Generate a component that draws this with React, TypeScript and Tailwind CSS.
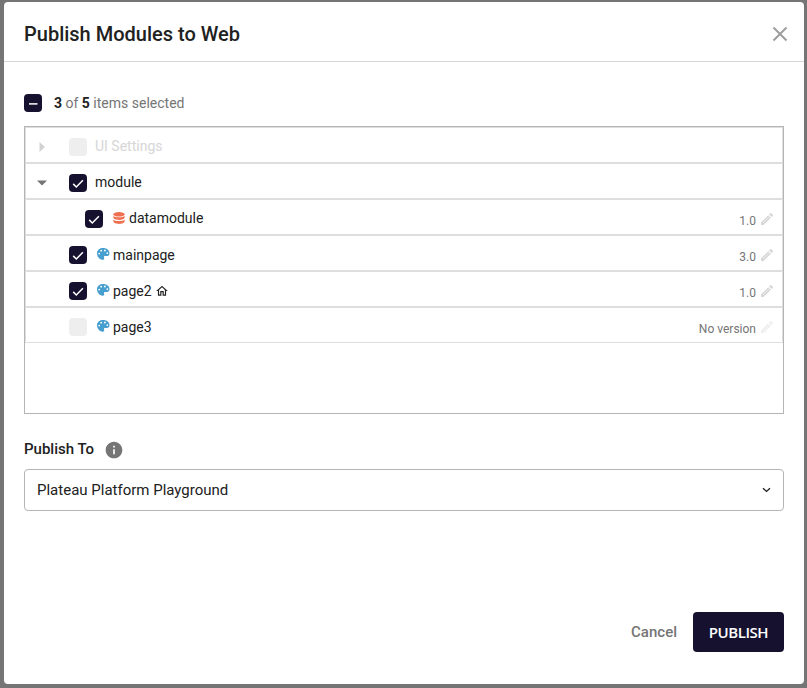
import React from "react";
import { MdEdit, MdInfo, MdOutlineHome } from "react-icons/md";

function Box({ state }: { state: "on" | "off" | "partial" }) {
  return (
    <span
      className={
        "flex size-[18px] shrink-0 items-center justify-center rounded-[4px] " +
        (state === "off" ? "bg-[#eeeeee]" : "bg-[#16112f]")
      }
    >
      {state === "on" && (
        <svg viewBox="0 0 18 18" className="size-[18px]" fill="none" stroke="white" strokeWidth="1.5">
          <path d="M4.2 9.9 7.3 13 13.9 6.3" />
        </svg>
      )}
      {state === "partial" && (
        <svg viewBox="0 0 18 18" className="size-[18px]" fill="none" stroke="white" strokeWidth="1.5">
          <path d="M5 9.9H13.5" />
        </svg>
      )}
    </span>
  );
}

function DataIcon() {
  return (
    <svg viewBox="0 0 12 12" className="ml-[10px] mt-px h-3 w-3 shrink-0 fill-[#ee7050]">
      <ellipse cx="6" cy="2.3" rx="5.6" ry="2.3" />
      <path d="M.4 3.7C1.8 5.7 10.2 5.7 11.6 3.7V5.6C11.6 8.7.4 8.7.4 5.6Z" />
      <path d="M.4 7.5C1.8 9.5 10.2 9.5 11.6 7.5V9.3C11.6 12.8.4 12.8.4 9.3Z" />
    </svg>
  );
}

function PageIcon() {
  return (
    <svg viewBox="0 0 12.5 12" className="ml-[10px] mt-px h-3 w-[12.5px] shrink-0">
      <path className="fill-[#479fd0]" d="M6.2.1C2.7.1 0 2.2 0 5.1 0 8.4 2.4 11.8 5.6 11.8 7.1 11.8 7.5 11 7.1 9.8 6.6 8.3 7.3 7.7 8.8 8 11 8.4 12.5 7.5 12.5 5.3 12.5 2.3 9.7.1 6.2.1Z" />
      <g fill="white">
        <circle cx="2.2" cy="5.6" r=".9" />
        <circle cx="4.2" cy="2.7" r=".9" />
        <circle cx="7.9" cy="2.5" r=".9" />
        <circle cx="10.3" cy="5.1" r=".9" />
      </g>
    </svg>
  );
}

function PencilIcon({ faint }: { faint: boolean }) {
  return (
    <span className="relative ml-[3px] mt-[3px] size-4">
      <MdEdit className={"size-4 " + (faint ? "text-[#eeeeee]" : "text-[#d6d6d6]")} />
      <svg viewBox="0 0 16 16" className="absolute inset-0 size-4 fill-none stroke-white stroke-[0.6]"><path d="M4 12 10.6 5.4" /></svg>
    </span>
  );
}

type Item = {
  name: string;
  indent?: boolean;
  arrow?: "right" | "down";
  checked: boolean;
  icon?: "data" | "page";
  home?: boolean;
  version?: string;
  disabled?: boolean;
};

const items: Item[] = [
  { name: "UI Settings", arrow: "right", checked: false, disabled: true },
  { name: "module", arrow: "down", checked: true },
  { name: "datamodule", indent: true, checked: true, icon: "data", version: "1.0" },
  { name: "mainpage", checked: true, icon: "page", version: "3.0" },
  { name: "page2", checked: true, icon: "page", home: true, version: "1.0" },
  { name: "page3", checked: false, icon: "page", version: "No version" },
];

function Row({ item }: { item: Item }) {
  return (
    <div className="flex h-9 items-center border border-[#dedede] pr-[7px]">
      <span className={"flex shrink-0 pl-[11px] pt-1 " + (item.indent ? "w-[59px]" : "w-[43px]")}>
        {item.arrow === "right" && (
          <svg viewBox="0 0 10 10" className="size-[10px] fill-[#d2d2d2]"><path d="M2.5 0 8 5 2.5 10Z" /></svg>
        )}
        {item.arrow === "down" && (
          <svg viewBox="0 0 10 10" className="size-[10px] fill-[#757575]"><path d="M0 2.5H10L5 7.5Z" /></svg>
        )}
      </span>
      <span className="pt-[3px]"><Box state={item.checked ? "on" : "off"} /></span>
      {item.icon === "page" && <PageIcon />}
      {item.icon === "data" && <DataIcon />}
      <span
        className={
          "text-[14px] leading-5 " +
          (item.icon === "page" ? "ml-[3.5px] pt-[3px] " : item.icon ? "ml-1 pt-0.5 " : "ml-2 pt-0.5 ") +
          (item.disabled ? "text-[#d6d6d6]" : "text-[#212121]")
        }
      >
        {item.name}
      </span>
      {item.home && <MdOutlineHome className="ml-[3.5px] mt-[3px] size-[14px] text-[#212121]" />}
      {item.version && (
        <span className="ml-auto flex items-center">
          <span className="pt-[7px] text-[12px] leading-4 text-[#757575]">{item.version}</span>
          <PencilIcon faint={!item.checked} />
        </span>
      )}
    </div>
  );
}

export default function App() {
  return (
    <div className="h-[688px] w-[807px] overflow-hidden bg-[#757575] pl-1 pt-0.5 font-['Roboto',sans-serif] text-[#212121]">
      <div className="flex h-[682px] w-[800px] flex-col rounded-[4px] bg-white">
        <header className="flex h-[60px] shrink-0 items-center justify-between border-b border-[#d6d6d6] pl-5 pr-[16.5px] pt-1">
          <h1 className="text-[20px] font-medium leading-6">Publish Modules to Web</h1>
          <svg viewBox="0 0 16 16" className="size-4 fill-none stroke-[#9e9e9e] stroke-2"><path d="M1.5 1.5 14.5 14.5M14.5 1.5 1.5 14.5" /></svg>
        </header>
        <main className="flex flex-1 flex-col px-5">
          <div className="mt-8 flex h-[18px] items-center">
            <Box state="partial" />
            <p className="ml-3 text-[14px] leading-5 text-[#757575]">
              <b className="font-bold text-[#212121]">3</b> of <b className="font-bold text-[#212121]">5</b> items selected
            </p>
          </div>
          <div className="mt-[14px] h-72 w-[760px] border border-[#b5b5b5]">
            {items.map((i) => <Row key={i.name} item={i} />)}
          </div>
          <div className="mt-[25px] flex h-5 items-center">
            <span className="text-[15px] font-medium leading-5">Publish To</span>
            <MdInfo className="ml-[9.5px] mt-px size-5 text-[#757575]" />
          </div>
          <div className="mt-[10px] flex h-[42px] items-center justify-between rounded-[4px] border border-[#b5b5b5] pl-3 pr-3">
            <span className="text-[15px] leading-5">Plateau Platform Playground</span>
            <svg viewBox="0 0 9 9" className="size-[9px] fill-none stroke-[#212121] stroke-[1.4]"><path d="M1 2.2 4.5 5.4 8 2.2" /></svg>
          </div>
        </main>
        <footer className="mb-8 flex h-10 shrink-0 items-center justify-end pr-5">
          <button className="text-[15px] font-medium text-[#757575]">Cancel</button>
          <button className="ml-4 h-10 w-[91px] rounded-[4px] bg-[#16112f] font-['Open_Sans',sans-serif] text-[15px] font-semibold tracking-[-0.45px] text-white">PUBLISH</button>
        </footer>
      </div>
    </div>
  );
}
